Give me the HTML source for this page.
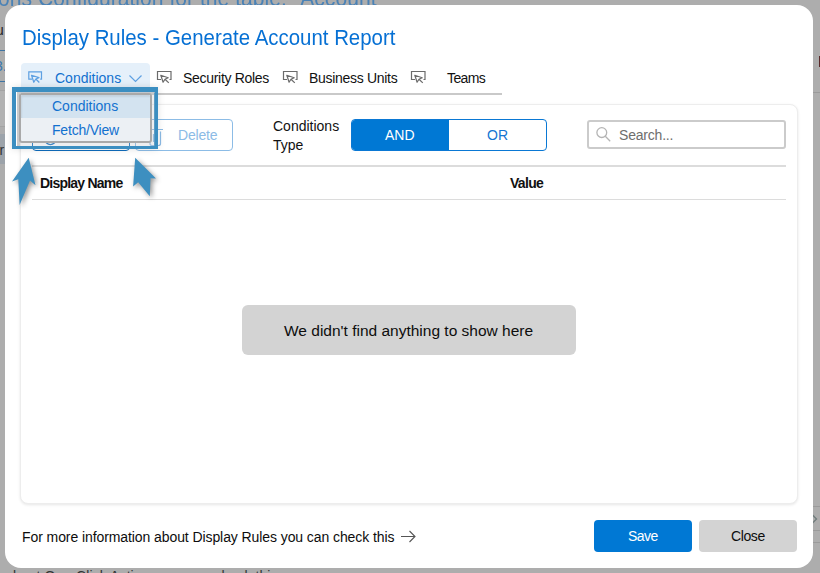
<!DOCTYPE html>
<html><head><meta charset="utf-8">
<style>
*{margin:0;padding:0;box-sizing:border-box}
html,body{width:820px;height:573px;overflow:hidden;background:#adadad;font-family:"Liberation Sans",sans-serif}
.a{position:absolute;white-space:nowrap}
.t{position:absolute;white-space:nowrap;line-height:1}
</style></head><body>
<!-- background page bits -->
<div class="t" style="left:-1.7px;top:-14px;font-size:24px;color:#4a82b6;transform:scaleX(0.88);transform-origin:0 0">ons Configuration for the table: "Account"</div>
<div class="a" style="left:0;top:50px;width:6px;height:1px;background:#3f75a3"></div>
<div class="a" style="left:0;top:81px;width:6px;height:1px;background:#3f75a3"></div>
<div class="a" style="left:0;top:90px;width:6px;height:37px;border:1px solid #a3a3a3;border-left:none;background:#b2b2b2"></div>
<div class="a" style="left:0;top:134px;width:6px;height:30px;background:#9ca3aa"></div>
<div class="a" style="left:813px;top:92px;width:7px;height:1px;background:#9a9a9a"></div>
<div class="a" style="left:818.5px;top:56px;width:1.5px;height:11px;background:#5a2a2a"></div>
<div class="a" style="left:813px;top:506px;width:7px;height:1px;background:#9a9a9a"></div>
<div class="a" style="left:813px;top:530px;width:7px;height:1px;background:#9a9a9a"></div>
<div class="a" style="left:813px;top:542px;width:7px;height:1px;background:#9a9a9a"></div>

<div class="t" style="left:-4.5px;top:21.5px;font-size:15px;color:#2a2a2a">u</div>
<div class="t" style="left:-5px;top:59px;font-size:14px;color:#3a78b0">3.</div>
<div class="t" style="left:-0.5px;top:143px;font-size:14px;color:#333">r</div>
<svg class="a" style="left:808px;top:510px" width="12" height="18" viewBox="808 510 12 18" fill="none"><path d="M812.5 515L816.5 519L812.5 523" stroke="#6f7b7b" stroke-width="1.3"/></svg>
<!-- modal -->
<div class="a" style="left:5px;top:5px;width:808px;height:563px;background:#fff;border-radius:16px"></div>

<!-- title -->
<div class="t" style="left:22px;top:26.6px;font-size:22.4px;color:#0670d4;transform:scaleX(0.912);transform-origin:0 0">Display Rules - Generate Account Report</div>

<!-- tabs -->
<div class="a" style="left:21px;top:63px;width:129px;height:30px;background:#e5f0fa;border-radius:4px 4px 0 0"></div>
<div class="a" style="left:21px;top:93px;width:481px;height:2px;background:#c9c9c9"></div>
<div class="t" style="left:55px;top:71px;font-size:14px;color:#1271cf">Conditions</div>
<div class="t" style="left:183px;top:71px;font-size:14px;color:#111;letter-spacing:-0.3px">Security Roles</div>
<div class="t" style="left:309px;top:71px;font-size:14px;color:#111;letter-spacing:-0.3px">Business Units</div>
<div class="t" style="left:447px;top:71px;font-size:14px;color:#111;letter-spacing:-0.6px">Teams</div>


<!-- tab icons -->
<svg class="a" style="left:0;top:0" width="820" height="573" viewBox="0 0 820 573" fill="none">
 <g stroke="#5ea0e2" stroke-width="1.2">
  <path d="M32 79.2H28.8V71.8H41.5V79.2H40.2"/>
  <path d="M31.5 75.3L39 77.6L35.8 79L33.8 82.3Z" stroke-linejoin="round"/>
  <path d="M35.8 79L39.3 82.5"/>
  <path d="M129.5 75.5L135.5 81.5L141.5 75.5"/>
 </g>
 <g stroke="#6b6b6b" stroke-width="1.2">
  <path d="M161 79.5H157.5V71.5H171V79.5H169.5"/>
  <path d="M160.8 75.3L168.2 77.8L165 79.2L163.1 82.2Z" stroke-linejoin="round"/>
  <path d="M165 79.2L168.8 82.9"/>
  <path d="M287 79.5H283.5V71.5H297V79.5H295.5"/>
  <path d="M286.8 75.3L294.2 77.8L291 79.2L289.1 82.2Z" stroke-linejoin="round"/>
  <path d="M291 79.2L294.8 82.9"/>
  <path d="M415 79.5H411.5V71.5H425V79.5H423.5"/>
  <path d="M414.8 75.3L422.2 77.8L419 79.2L417.1 82.2Z" stroke-linejoin="round"/>
  <path d="M419 79.2L422.8 82.9"/>
 </g>
 <g stroke="#555" stroke-width="1.1">
  <path d="M401 536.5H415M409.5 531L415 536.5L409.5 542"/>
 </g>
</svg>

<!-- panel -->
<div class="a" style="left:20px;top:104px;width:778px;height:400px;background:#fff;border:1px solid #ededed;border-radius:8px;box-shadow:0 1px 3px rgba(0,0,0,0.10)"></div>

<!-- add button (hidden) -->
<div class="a" style="left:32px;top:119px;width:98px;height:32px;border:1px solid #0f6cbd;border-radius:4px"></div>
<svg class="a" style="left:0;top:0" width="820" height="573" viewBox="0 0 820 573" fill="none">
 <circle cx="50.4" cy="139.2" r="5.4" stroke="#0f6cbd" stroke-width="1.4"/>
 <g stroke="#8cbbe6" stroke-width="1.2">
  <path d="M147 129.5H163M150 131.5V143.5Q150 145.5 152 145.5H158.5Q160.5 145.5 160.5 143.5V131.5M153.5 134V142M157 134V142"/>
 </g>
</svg>
<!-- delete -->
<div class="a" style="left:135px;top:119px;width:98px;height:32px;border:1px solid #8cbce6;border-radius:4px"></div>
<div class="t" style="left:178px;top:128px;font-size:14px;color:#8cbbe6;letter-spacing:-0.2px">Delete</div>

<!-- conditions type -->
<div class="t" style="left:273px;top:119px;font-size:14px;color:#111">Conditions</div>
<div class="t" style="left:273px;top:138px;font-size:14px;color:#111">Type</div>
<div class="a" style="left:351px;top:119px;width:196px;height:32px;border:1px solid #0a78d4;border-radius:4px;overflow:hidden">
  <div class="a" style="left:0;top:0;width:97px;height:30px;background:#0078d4"></div>
</div>
<div class="t" style="left:385px;top:128px;font-size:14px;color:#fff">AND</div>
<div class="t" style="left:487px;top:128px;font-size:14px;color:#1475d2">OR</div>

<!-- search -->
<div class="a" style="left:587px;top:120px;width:199px;height:29px;border:2px solid #cbcbcb;border-radius:3px"></div>
<div class="t" style="left:619px;top:128px;font-size:14px;color:#6e6e6e;letter-spacing:-0.2px">Search...</div>

<svg class="a" style="left:590px;top:122px" width="30" height="26" viewBox="590 122 30 26" fill="none">
 <g stroke="#b4b4b4" stroke-width="1.3">
  <circle cx="601.8" cy="132.6" r="4.9"/>
  <path d="M605.3 136.2L610.2 141.2"/>
 </g>
</svg>
<!-- table header -->
<div class="a" style="left:32px;top:165px;width:754px;height:2px;background:#dcdcdc"></div>
<div class="a" style="left:32px;top:199px;width:754px;height:1px;background:#dcdcdc"></div>
<div class="t" style="left:40px;top:176px;font-size:14px;font-weight:bold;color:#111;letter-spacing:-0.78px">Display Name</div>
<div class="t" style="left:510px;top:176px;font-size:14px;font-weight:bold;color:#111;letter-spacing:-0.7px">Value</div>

<!-- empty box -->
<div class="a" style="left:242px;top:305px;width:334px;height:50px;background:#d3d3d3;border-radius:6px"></div>
<div class="t" style="left:284px;top:323px;font-size:15.5px;color:#0d0d0d">We didn't find anything to show here</div>

<!-- footer -->
<div class="t" style="left:22px;top:530px;font-size:14px;color:#0d0d0d;letter-spacing:-0.085px">For more information about Display Rules you can check this</div>
<div class="a" style="left:594px;top:520px;width:98px;height:32px;background:#0078d4;border-radius:4px"></div>
<div class="t" style="left:628px;top:529px;font-size:14px;color:#fff;letter-spacing:-0.5px">Save</div>
<div class="a" style="left:699px;top:520px;width:98px;height:32px;background:#d3d3d3;border-radius:4px"></div>
<div class="t" style="left:731px;top:529px;font-size:14px;color:#0d0d0d;letter-spacing:-0.4px">Close</div>

<!-- dropdown annotation -->
<div class="a" style="left:12.3px;top:87px;width:146px;height:62px;border-style:solid;border-color:#3b8ec1;border-width:5px 4px 3.6px 4.2px;box-shadow:0 0 7px rgba(0,0,0,0.13)"></div>
<div class="a" style="left:16.5px;top:92px;width:138.5px;height:53.7px;background:rgba(190,195,200,0.28);border-top:1px solid rgba(180,185,190,0.7);border-left:3px solid rgba(190,190,190,0.75)"></div>
<div class="a" style="left:19.3px;top:92.8px;width:133px;height:50px;border:2px solid #a9a9a9;border-radius:3px;background:#ecf0f4;overflow:hidden">
  <div class="a" style="left:0;top:0;width:130px;height:23px;background:#d3e3f0;box-shadow:inset 1px 2px 2px rgba(0,0,0,0.07)"></div>
</div>
<div class="t" style="left:52px;top:99px;font-size:14px;color:#1271cf">Conditions</div>
<div class="t" style="left:52px;top:123px;font-size:14px;color:#1271cf;letter-spacing:-0.2px">Fetch/View</div>

<!-- annotation arrows -->
<svg class="a" style="left:0;top:0;filter:drop-shadow(2px 2px 2.5px rgba(0,0,0,0.42))" width="820" height="573" viewBox="0 0 820 573">
 <path fill="#3d8fc0" d="M28.7 157.8L35.5 185.3L30 180.5L19.6 204.9L18.3 179.2L12 181.4Z"/>
 <path fill="#3d8fc0" d="M135.2 157.8L156 178.6L150.5 178.3L149.8 196.3L138.2 182.3L133.1 186.6Z"/>
</svg>
<div class="t" style="left:5px;top:569px;font-size:14px;color:#333;letter-spacing:0.1px">about One-Click Actions you can check this &#8594;</div>
</body></html>
